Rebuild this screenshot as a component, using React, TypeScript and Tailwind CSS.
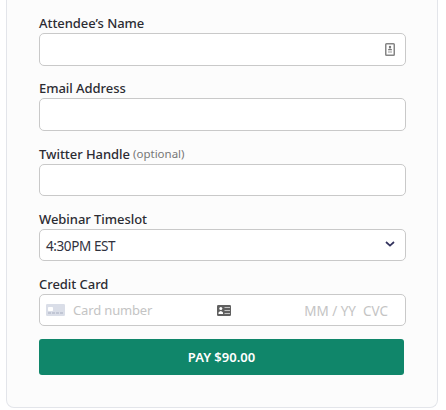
import type { ReactNode } from "react";

type FieldProps = {
  label: ReactNode;
  children?: ReactNode;
  tall?: boolean;
};

function Field({ label, children, tall }: FieldProps) {
  return (
    <div className="h-[65.25px]">
      <div className="flex h-5 items-center whitespace-nowrap text-[13px] font-medium leading-5 tracking-[-0.05px] text-[#2c2c33]">
        {label}
      </div>
      <div
        className={`flex w-[367px] items-center rounded-[5px] border border-[#c9c9c9] bg-white ${tall ? "h-[33px]" : "h-[32.4px]"}`}
      >
        {children}
      </div>
    </div>
  );
}

function ContactIcon() {
  return (
    <svg width="10" height="13" viewBox="0 0 10 13" className="mr-[10px] ml-auto">
      <rect x="0.75" y="0.75" width="8.5" height="11.5" rx="0.8" fill="#fff" stroke="#858585" strokeWidth="1.5" />
      <circle cx="5" cy="4" r="1.2" fill="#777" />
      <path d="M3 7.2V6.4Q5 4.6 7 6.4v.8z" fill="#777" />
      <path d="M3 9h4" stroke="#999" />
    </svg>
  );
}

function IdCardIcon() {
  return (
    <svg width="14" height="11" viewBox="0 0 14 11">
      <rect width="14" height="11" rx="1.3" fill="#606060" />
      <circle cx="3.8" cy="3.5" r="1.5" fill="#fff" />
      <path d="M1.5 9V7.6Q3.8 4.6 6 7.6V9z" fill="#fff" />
      <path d="M7.5 2.5H13M7.5 5.5H13M7.5 8.5H13" stroke="#c4c4c4" />
    </svg>
  );
}

function CreditCardIcon() {
  return (
    <svg width="19" height="12" viewBox="0 0 19 12" className="ml-[6px]">
      <rect width="19" height="12" rx="1.2" fill="#dadee8" />
      <rect x="2" y="3" width="5" height="4" rx="0.8" fill="#fff" />
      <path d="M2 9h3M6 9h3M10 9h3M14 9h3" stroke="#b9becd" strokeWidth="1.6" />
    </svg>
  );
}

export default function App() {
  return (
    <div className="h-[410px] w-[446px] bg-white pl-[6px] font-['Noto_Sans','Open_Sans',sans-serif]">
      <div className="h-[408px] w-[432px] rounded-b-[8px] border border-t-0 border-[#e3e5ea] bg-[#fcfcfc] pt-[13px] pl-8">
        <Field label="Attendee’s Name" tall>
          <ContactIcon />
        </Field>
        <Field label="Email Address" />
        <Field
          label={
            <>
              Twitter Handle
              <span className="mt-px ml-[3px] text-[11.5px] font-normal tracking-normal text-[#777]">(optional)</span>
            </>
          }
        />
        <Field label="Webinar Timeslot">
          <span className="mt-[2px] ml-[6px] text-[13.5px] tracking-[-0.4px] text-[#30313d]">4:30PM EST</span>
          <svg width="10" height="6" viewBox="0 0 10 6" className="mr-[10px] mb-px ml-auto">
            <path d="M1 1l4 3.6L9 1" fill="none" stroke="#32325d" strokeWidth="1.7" />
          </svg>
        </Field>
        <Field label="Credit Card">
          <div className="flex w-full items-center text-[13.5px] text-[#c4c4c4]">
            <CreditCardIcon />
            <span className="mt-[2px] ml-2 w-36 text-[13px] tracking-[-0.15px]">Card number</span>
            <IdCardIcon />
            <span className="mt-[2px] mr-[7px] ml-auto">MM / YY</span>
            <span className="mt-[2px] mr-[17px]">CVC</span>
          </div>
        </Field>
        <button className="flex h-9 w-[365px] items-center justify-center rounded-[3px] bg-[#10866a] pt-px text-[13px] font-semibold text-white">
          PAY $90.00
        </button>
      </div>
    </div>
  );
}
